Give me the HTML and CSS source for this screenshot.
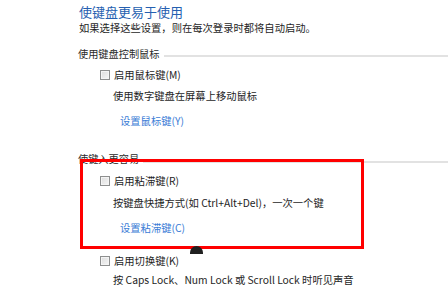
FILE: index.html
```html
<!DOCTYPE html>
<html lang="zh-CN">
<head>
  <meta charset="UTF-8" />
  <title>使键盘更易于使用</title>
  <link rel="stylesheet" href="styles.css">
</head>
<body>
  <div class="page">
    <h1 class="title">使键盘更易于使用</h1>
    <p class="intro">如果选择这些设置，则在每次登录时都将自动启动。</p>

    <!-- 鼠标键 -->
    <div class="group-head"><span>使用键盘控制鼠标</span><i class="rule"></i></div>
    <label class="option"><span class="box"></span>启用鼠标键(M)</label>
    <p class="desc">使用数字键盘在屏幕上移动鼠标</p>
    <a class="link" href="#">设置鼠标键(Y)</a>

    <!-- 粘滞键 / 切换键 -->
    <div class="group-head second"><span>使键入更容易</span><i class="rule"></i></div>
    <label class="option sticky"><span class="box"></span>启用粘滞键(R)</label>
    <p class="desc">按键盘快捷方式(如 Ctrl+Alt+Del)，一次一个键</p>
    <a class="link" href="#">设置粘滞键(C)</a>

    <label class="option toggle"><span class="box"></span>启用切换键(K)</label>
    <p class="desc last">按 Caps Lock、Num Lock 或 Scroll Lock 时听见声音</p>
  </div>

  <!-- 标注框 -->
  <div class="mark"></div>
  <div class="cursor"></div>
</body>
</html>
```

FILE: styles.css
```css
body {
  margin: 0;
  background: #fff;
  font-family: "Noto Sans CJK SC", "Noto Sans", sans-serif;
  color: #1e1e1e;
  overflow: hidden;
}

.page {
  display: flex;
  flex-direction: column;
  align-items: flex-start;
  padding-left: 79px;
}

.title {
  margin: 4px 0 0;
  font-size: 13px;
  line-height: 16px;
  font-weight: normal;
  color: #2560b0;
}

.intro {
  margin: 1px 0 0;
  font-size: 10.3px;
  line-height: 14px;
}

.group-head {
  align-self: stretch;
  display: flex;
  align-items: center;
  margin: 12px 0 0 -1px;
  font-size: 10.2px;
  line-height: 14px;
  color: #2a2a2a;
}

.group-head.second {
  margin-top: 24px;
}

.rule {
  flex: 1;
  height: 2px;
  margin: 3px 0 0 4px;
  background: #e2e2e2;
}

.second .rule {
  margin-top: 5px;
}

.option {
  display: flex;
  align-items: center;
  margin: 7px 0 0 21px;
  font-size: 10.3px;
  line-height: 14px;
}

.option.sticky {
  margin-top: 8px;
}

.option.toggle {
  margin-top: 19px;
}

.box {
  width: 8px;
  height: 8px;
  margin-right: 4px;
  border: 1px solid #8e8f8f;
  background: linear-gradient(135deg, #dcdcdc, #f6f6f6);
  box-shadow: inset 0 0 0 1px #f4f4f4;
}

.desc {
  margin: 7px 0 0 34px;
  font-size: 10.3px;
  line-height: 14px;
}

.sticky + .desc {
  margin-top: 8px;
}

.desc.last {
  margin-top: 5px;
}

.link {
  margin: 11px 0 0 41px;
  font-size: 10.3px;
  line-height: 14px;
  color: #3a7cd6;
  text-decoration: none;
}

/* 红色标注框 */
.mark {
  position: absolute;
  left: 80px;
  top: 159px;
  width: 278px;
  height: 84px;
  border: 3px solid #ff0000;
}

.cursor {
  position: absolute;
  left: 190px;
  top: 246px;
  width: 13px;
  height: 8px;
  border-radius: 7px 7px 0 0;
  background: #202020;
}
```
